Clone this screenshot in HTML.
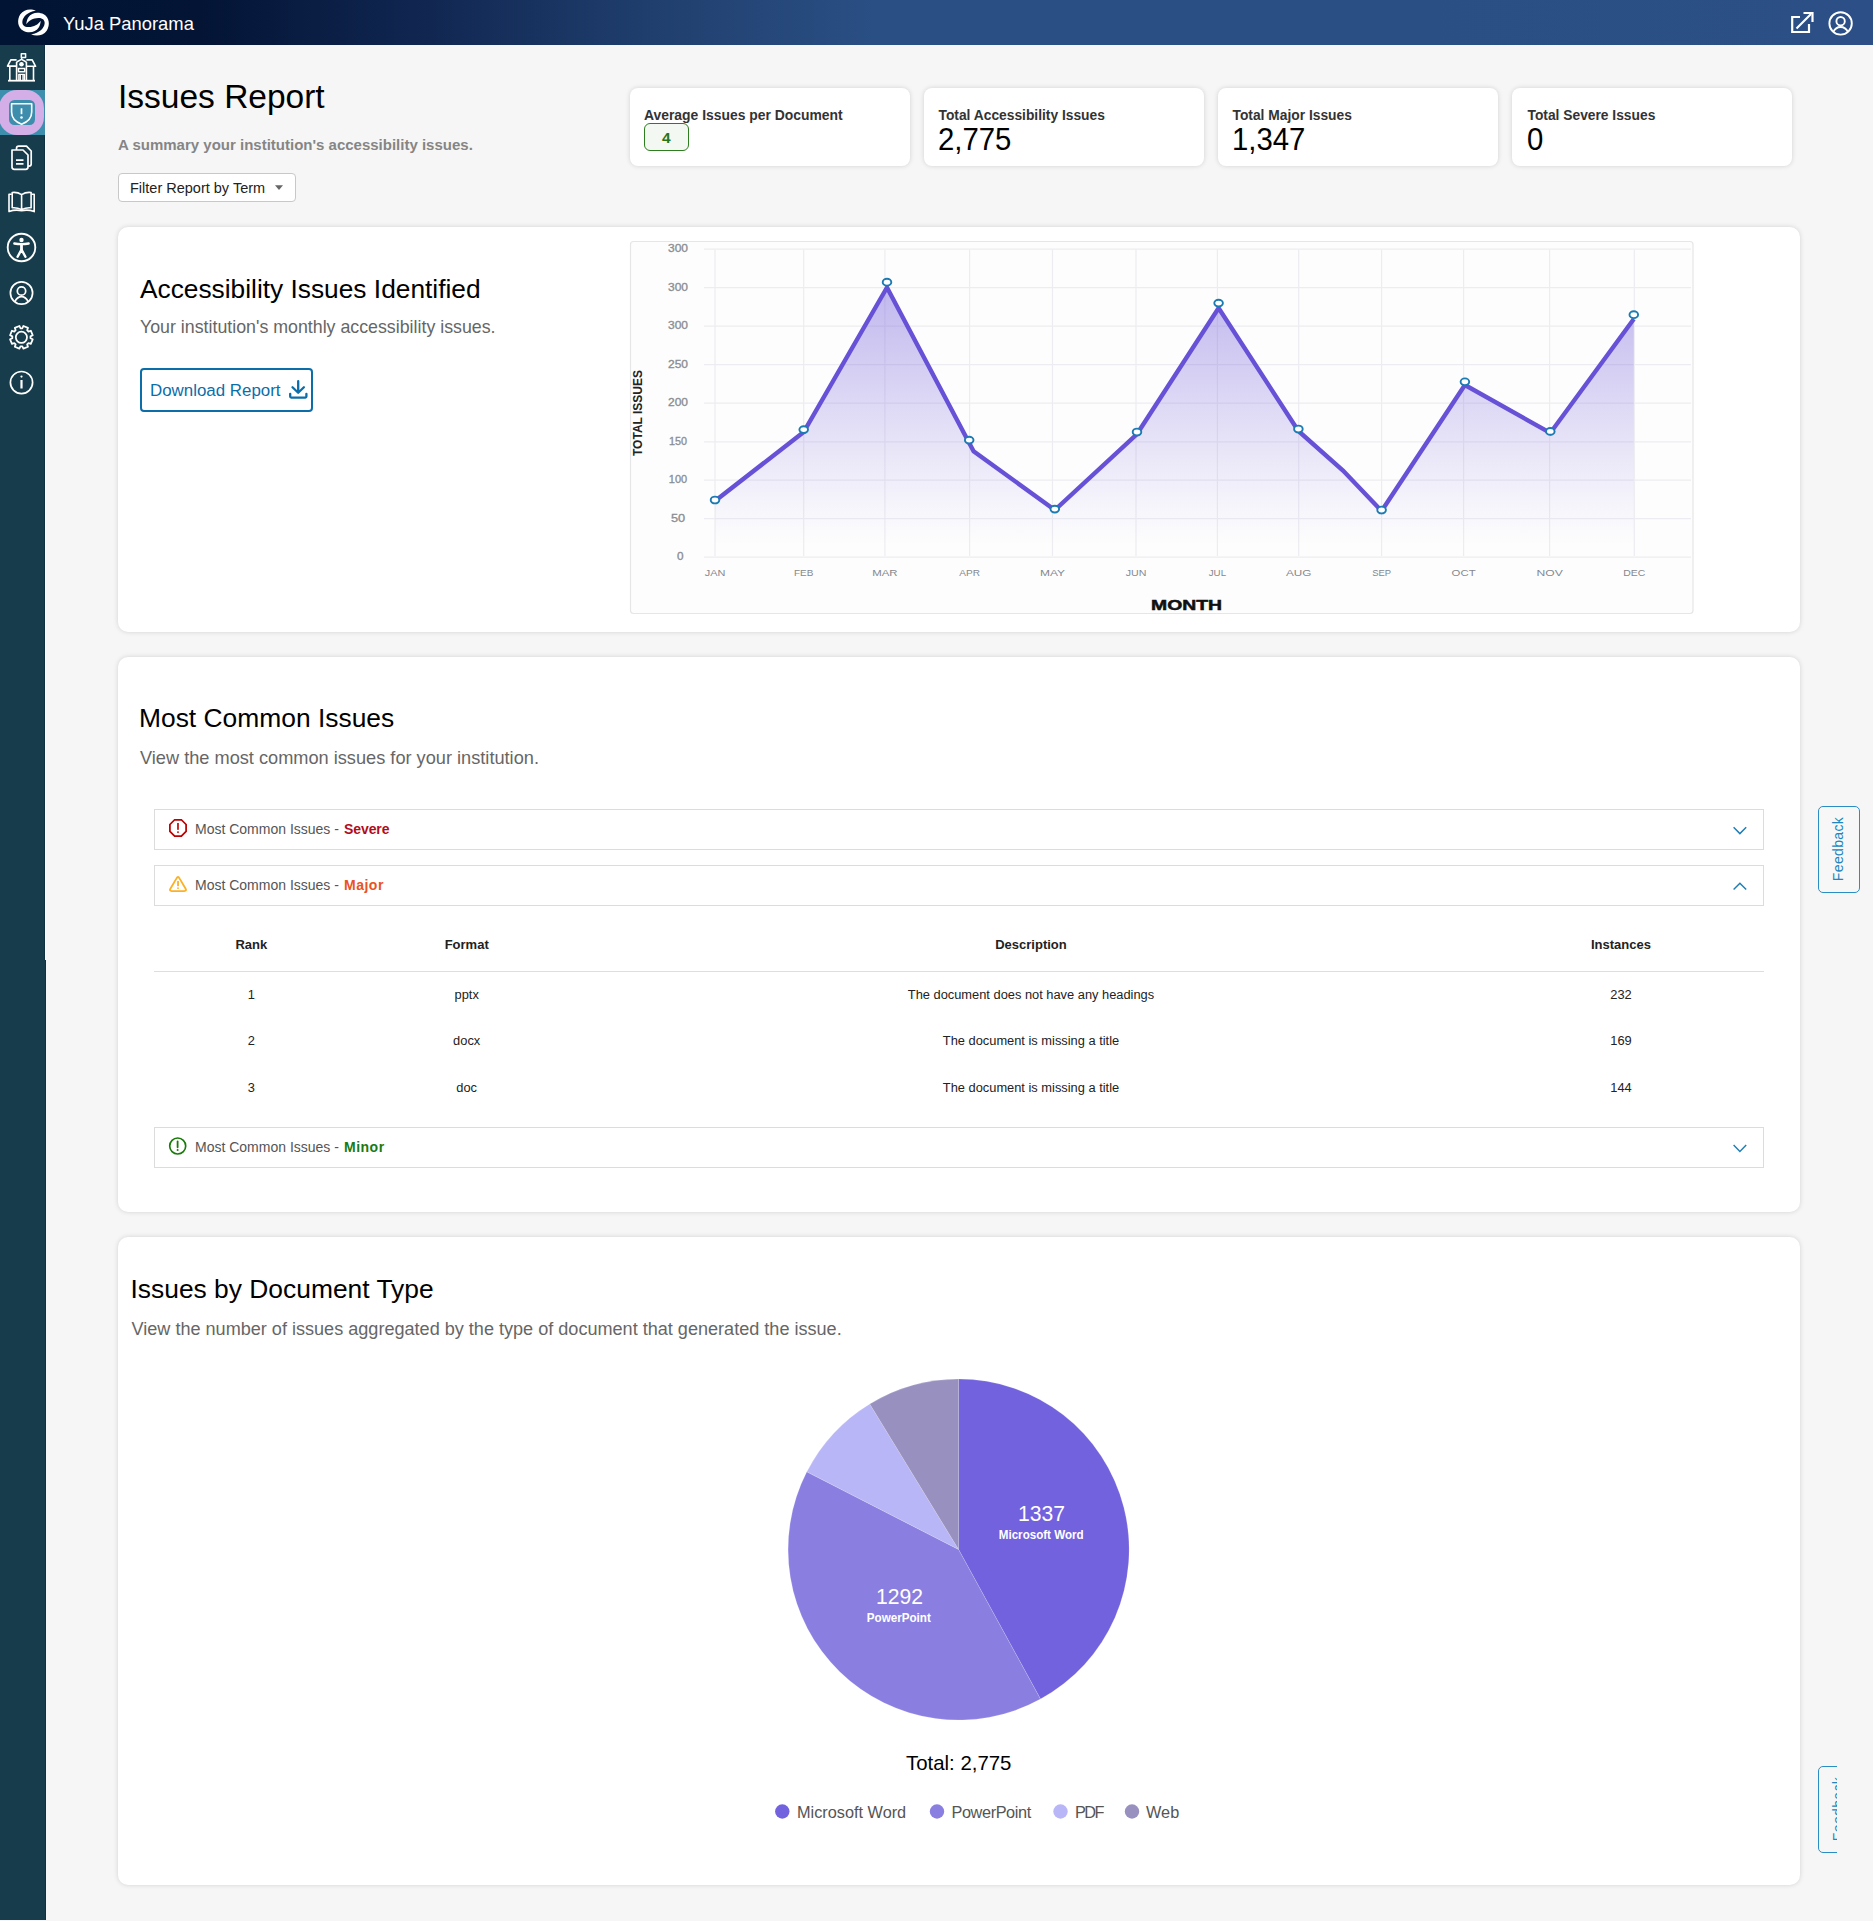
<!DOCTYPE html>
<html><head><meta charset="utf-8">
<style>
*{box-sizing:border-box;margin:0;padding:0}
html,body{width:1873px;height:1921px;overflow:hidden;background:#f6f6f6;font-family:"Liberation Sans",sans-serif;}
.abs{position:absolute}
#hdr{position:absolute;left:0;top:0;width:1873px;height:45px;background:linear-gradient(90deg,#021434 0px,#031435 200px,#112752 430px,#203f6e 655px,#2a4f84 875px,#2b4f86 1873px)}
#side{position:absolute;left:0;top:45px;width:45px;height:915px;background:#173c4c;box-shadow:inset -1px 0 0 #0d3140, 1px 0 0 #fff}
.card{position:absolute;background:#fff;border-radius:10px;box-shadow:0 0 5px rgba(0,0,0,0.15)}
.t{position:absolute;white-space:nowrap;line-height:1}
</style></head>
<body>
<div id="hdr">
<svg class="abs" style="left:0;top:0" width="60" height="45" viewBox="0 0 60 45">
 <path d="M35.9,10.8 C31,8.5 24,9 20.3,14.3 C16.5,20.3 17.8,27.8 23.3,30.8 C28.8,33.8 35.8,32.3 38.9,27.3 C40,25.3 40.6,22.8 40.7,20.7 C38.3,24.5 33.8,26.9 28.8,27.1 C24.5,27.3 21.9,25 22.4,21.3 C23,16.8 27.3,12 35.9,10.8 Z" fill="#fff"/>
 <path d="M31.1,34.3 C36,36.5 43,36 46.7,30.7 C50.5,24.7 49.2,17.2 43.7,14.2 C38.2,11.2 31.2,12.7 28.1,17.7 C27,19.7 26.4,22.2 26.3,24.3 C28.7,20.5 33.2,18.1 38.2,17.9 C42.5,17.7 45.1,20 44.6,23.7 C44,28.2 39.7,33 31.1,34.3 Z" fill="#fff"/>
</svg>
<div class="t" style="left:63px;top:15px;font-size:18.4px;color:#fff">YuJa Panorama</div>
<svg class="abs" style="left:1785px;top:6px" width="80" height="34" viewBox="1785 6 80 34">
 <path d="M1800 17 H1792.2 V32 H1809 V24" fill="none" stroke="#fff" stroke-width="2.2"/>
 <path d="M1796.5 28.5 L1811 14" fill="none" stroke="#fff" stroke-width="2.2"/>
 <path d="M1803.5 13 H1812.5 V22" fill="none" stroke="#fff" stroke-width="2.2"/>
 <circle cx="1840.6" cy="23.4" r="11.2" fill="none" stroke="#fff" stroke-width="1.9"/>
 <circle cx="1840.6" cy="21.2" r="4.2" fill="none" stroke="#fff" stroke-width="1.9"/>
 <path d="M1833.2 32.2 C1835 28.2 1838 27 1840.6 27 C1843.2 27 1846.2 28.2 1848 32.2" fill="none" stroke="#fff" stroke-width="1.9"/>
</svg>
</div>
<div class="abs" style="left:0;top:960px;width:46px;height:960px;background:#173c4c;box-shadow:inset -1px 0 0 #0d3140"></div>
<div id="side">
<div class="abs" style="left:0;top:44.7px;width:44.8px;height:45.8px;background:#3e8fae"></div>
<div class="abs" style="left:-1px;top:45px;width:45.3px;height:45.4px;background:#d4aee6;border-radius:18px"></div>
<div class="abs" style="left:8.9px;top:54.9px;width:26px;height:25.1px;background:#3d8dad;border-radius:5.5px"></div>
<svg class="abs" style="left:0;top:0" width="45" height="360" viewBox="0 45 45 360" fill="none" stroke="#fff" stroke-width="1.7" stroke-linejoin="round">
 <!-- school -->
 <path d="M8 80.7 H35" stroke-width="1.8"/>
 <path d="M9.8 80.7 V66 M33.5 80.7 V66 M16.6 80.7 V62 M26.4 80.7 V62" stroke-width="1.6"/>
 <path d="M16.6 59.9 H10.8 L7.5 66.1 H16.6 M26.4 59.9 H32.2 L35.6 66.3 H26.4" stroke-width="1.6"/>
 <path d="M16.6 62 L21.5 59.4 L26.4 62" stroke-width="1.5"/>
 <path d="M21.6 59.4 V57.6 M21.3 53.7 H25.6 V57.6 H21.3 Z" stroke-width="1.5"/>
 <circle cx="21.5" cy="64.3" r="2.3" fill="#fff" stroke="none"/>
 <path d="M18.5 68.4 H24.7 V71.7 H18.5 Z" stroke-width="1.5"/>
 <path d="M18.8 80.7 V74.3 H24.5 V80.7 M20.3 75 V80.7 M23 75 V80.7" stroke-width="1.3"/>
 <!-- shield -->
 <path d="M11.6 103.7 H31.7 V112 C31.7 118 27 122.2 21.6 124.2 C16.2 122.2 11.6 118 11.6 112 Z" stroke-width="1.6"/>
 <path d="M21.5 108.3 V114.2" stroke-width="1.7"/>
 <circle cx="21.5" cy="117.5" r="1.3" fill="#fff" stroke="none"/>
 <!-- docs -->
 <path d="M16.5 150 V148.5 Q16.5 146.2 18.8 146.2 H26.5 L31.2 151 V164 Q31.2 166.2 29 166.2 H28"/>
 <path d="M12 150 H23 L28 155 V167 Q28 169.3 25.8 169.3 H14.3 Q12 169.3 12 167 Z" fill="#173c4b"/>
 <path d="M16 160.2 H23.5 M16 163.8 H23.5"/>
 <!-- book -->
 <path d="M11.8 194.2 H9 V211.6 Q15.5 209.2 21.6 210.8 Q27.7 209.2 34.2 211.6 V194.2 H31.4" stroke-width="1.6"/>
 <path d="M12.2 192.5 V207.8 Q17 207.3 21.6 209.6 Q26.2 207.3 31.1 207.8 V192.5 Q26 191.8 21.6 194.6 Q17.2 191.8 12.2 192.5 Z M21.6 194.6 V209.6" stroke-width="1.6"/>
 <!-- accessibility -->
 <circle cx="21.5" cy="247.5" r="13.8" stroke-width="1.9"/>
 <circle cx="21.5" cy="240" r="2.2" fill="#fff" stroke="none"/>
 <path d="M14.3 243.5 Q21.5 244.8 28.7 243.5" stroke-width="2.3" stroke-linecap="round"/>
 <path d="M21.5 244 V250" stroke-width="2.8"/>
 <path d="M21.5 249.5 L17.6 256.8 M21.5 249.5 L25.4 256.8" stroke-width="2.4" stroke-linecap="round"/>
 <!-- user -->
 <circle cx="21.5" cy="293" r="11.1" stroke-width="1.7"/>
 <circle cx="21.5" cy="291" r="4.2" stroke-width="1.7"/>
 <path d="M14.8 301.6 Q17.5 296.6 21.5 296.6 Q25.5 296.6 28.2 301.6" stroke-width="1.7"/>
 <!-- gear -->
 <path d="M20.45 328.25 L22.35 328.25 L23.40 325.97 L28.00 327.88 L27.13 330.23 L28.47 331.57 L30.82 330.70 L32.73 335.30 L30.45 336.35 L30.45 338.25 L32.73 339.30 L30.82 343.90 L28.47 343.03 L27.13 344.37 L28.00 346.72 L23.40 348.63 L22.35 346.35 L20.45 346.35 L19.40 348.63 L14.80 346.72 L15.67 344.37 L14.33 343.03 L11.98 343.90 L10.07 339.30 L12.35 338.25 L12.35 336.35 L10.07 335.30 L11.98 330.70 L14.33 331.57 L15.67 330.23 L14.80 327.88 L19.40 325.97 Z" stroke-width="1.75" stroke-linejoin="round"/>
 <circle cx="21.4" cy="337.3" r="5.6" stroke-width="1.75"/>
 <!-- info -->
 <circle cx="21.5" cy="382.6" r="11.1" stroke-width="1.7"/>
 <circle cx="21.5" cy="376.6" r="1.1" fill="#fff" stroke="none"/>
 <path d="M21.5 380 V388.5" stroke-width="2.2"/>
</svg>
</div>

<!-- title -->
<div class="t" style="left:118px;top:79.5px;font-size:33.5px;color:#000">Issues Report</div>
<div class="t" style="left:118px;top:137px;font-size:15px;font-weight:bold;color:#858585">A summary your institution's accessibility issues.</div>
<div class="abs" style="left:118px;top:173px;width:178px;height:29px;border:1px solid #c8c8c8;border-radius:4px;background:#fff"></div>
<div class="t" style="left:130px;top:181px;font-size:14.5px;color:#222">Filter Report by Term</div>
<svg class="abs" style="left:274px;top:184px" width="10" height="7" viewBox="0 0 10 7"><path d="M1 1.2 H9 L5 6 Z" fill="#666"/></svg>

<!-- stat cards -->
<div class="card" style="left:630px;top:88px;width:280px;height:78px;border-radius:8px"></div>
<div class="card" style="left:924px;top:88px;width:280px;height:78px;border-radius:8px"></div>
<div class="card" style="left:1218px;top:88px;width:280px;height:78px;border-radius:8px"></div>
<div class="card" style="left:1512px;top:88px;width:280px;height:78px;border-radius:8px"></div>
<div class="t" style="left:644px;top:108.5px;font-size:13.9px;font-weight:bold;color:#333">Average Issues per Document</div>
<div class="abs" style="left:644px;top:123px;width:45px;height:28px;border:1.5px solid #2e7d1e;border-radius:6px;background:#f3f8f2"></div>
<div class="t" style="left:662px;top:130px;font-size:15.5px;font-weight:bold;color:#2a7512">4</div>
<div class="t" style="left:938.5px;top:109px;font-size:13.8px;font-weight:bold;color:#333">Total Accessibility Issues</div>
<div class="t" style="left:938px;top:124px;font-size:31.4px;color:#000;transform:scaleX(0.935);transform-origin:0 0">2,775</div>
<div class="t" style="left:1232.5px;top:109px;font-size:13.8px;font-weight:bold;color:#333">Total Major Issues</div>
<div class="t" style="left:1232px;top:124px;font-size:31.4px;color:#000;transform:scaleX(0.935);transform-origin:0 0">1,347</div>
<div class="t" style="left:1527.5px;top:109px;font-size:13.8px;font-weight:bold;color:#333">Total Severe Issues</div>
<div class="t" style="left:1527px;top:124px;font-size:31.4px;color:#000;transform:scaleX(0.935);transform-origin:0 0">0</div>

<!-- section cards -->
<div class="card" style="left:118px;top:227px;width:1682px;height:405px"></div>
<div class="card" style="left:118px;top:657px;width:1682px;height:555px"></div>
<div class="card" style="left:118px;top:1237px;width:1682px;height:648px"></div>

<!-- section 1 -->
<div class="t" style="left:140px;top:276px;font-size:26.3px;color:#000">Accessibility Issues Identified</div>
<div class="t" style="left:140px;top:319px;font-size:17.8px;color:#666">Your institution's monthly accessibility issues.</div>
<div class="abs" style="left:140px;top:368px;width:173px;height:44px;border:2px solid #0b6ea9;border-radius:4px"></div>
<div class="t" style="left:150px;top:383px;font-size:16.9px;color:#0b6ea9">Download Report</div>
<svg class="abs" style="left:286px;top:379px" width="24" height="22" viewBox="0 0 24 22" fill="none" stroke="#0b6ea9" stroke-width="2.3" stroke-linecap="round" stroke-linejoin="round">
 <path d="M12.2 2.2 V13.5 M6.5 8.2 L12.2 13.8 L17.9 8.2"/>
 <path d="M4.2 14.8 V17.6 Q4.2 18.6 5.2 18.6 H19.4 Q20.4 18.6 20.4 17.6 V14.8"/>
</svg>

<!-- chart -->
<svg class="abs" style="left:626px;top:237px" width="1072" height="381" viewBox="626 237 1072 381">
<defs><linearGradient id="ag" gradientUnits="userSpaceOnUse" x1="0" y1="282" x2="0" y2="545"><stop offset="0" stop-color="#6a55d8" stop-opacity="0.42"/><stop offset="0.5" stop-color="#6a55d8" stop-opacity="0.2"/><stop offset="0.85" stop-color="#6a55d8" stop-opacity="0.05"/><stop offset="1" stop-color="#6a55d8" stop-opacity="0"/></linearGradient></defs>
<rect x="630.5" y="241.5" width="1062.5" height="372" rx="3" fill="#fdfdfd" stroke="#e6e6e8" stroke-width="1.2"/>
<line x1="704" y1="249.2" x2="1691" y2="249.2" stroke="#ededf1" stroke-width="1.2"/>
<line x1="704" y1="287.6" x2="1691" y2="287.6" stroke="#ededf1" stroke-width="1.2"/>
<line x1="704" y1="326.1" x2="1691" y2="326.1" stroke="#ededf1" stroke-width="1.2"/>
<line x1="704" y1="364.6" x2="1691" y2="364.6" stroke="#ededf1" stroke-width="1.2"/>
<line x1="704" y1="403.2" x2="1691" y2="403.2" stroke="#ededf1" stroke-width="1.2"/>
<line x1="704" y1="441.8" x2="1691" y2="441.8" stroke="#ededf1" stroke-width="1.2"/>
<line x1="704" y1="480.2" x2="1691" y2="480.2" stroke="#ededf1" stroke-width="1.2"/>
<line x1="704" y1="518.6" x2="1691" y2="518.6" stroke="#ededf1" stroke-width="1.2"/>
<line x1="704" y1="557.2" x2="1691" y2="557.2" stroke="#ededf1" stroke-width="1.2"/>
<line x1="715" y1="249.5" x2="715" y2="556" stroke="#ededf1" stroke-width="1.2"/>
<line x1="803.7" y1="249.5" x2="803.7" y2="556" stroke="#ededf1" stroke-width="1.2"/>
<line x1="884.9" y1="249.5" x2="884.9" y2="556" stroke="#ededf1" stroke-width="1.2"/>
<line x1="969.6" y1="249.5" x2="969.6" y2="556" stroke="#ededf1" stroke-width="1.2"/>
<line x1="1052.5" y1="249.5" x2="1052.5" y2="556" stroke="#ededf1" stroke-width="1.2"/>
<line x1="1136" y1="249.5" x2="1136" y2="556" stroke="#ededf1" stroke-width="1.2"/>
<line x1="1217.4" y1="249.5" x2="1217.4" y2="556" stroke="#ededf1" stroke-width="1.2"/>
<line x1="1298.7" y1="249.5" x2="1298.7" y2="556" stroke="#ededf1" stroke-width="1.2"/>
<line x1="1381.6" y1="249.5" x2="1381.6" y2="556" stroke="#ededf1" stroke-width="1.2"/>
<line x1="1463.6" y1="249.5" x2="1463.6" y2="556" stroke="#ededf1" stroke-width="1.2"/>
<line x1="1549.6" y1="249.5" x2="1549.6" y2="556" stroke="#ededf1" stroke-width="1.2"/>
<line x1="1634.3" y1="249.5" x2="1634.3" y2="556" stroke="#ededf1" stroke-width="1.2"/>
<path d="M715,557 L715,501 L803.7,432 L887,287.5 L969.2,443 L973.6,451.3 L1054.8,510 L1137,434 L1218.6,308 L1298.4,431 L1343,470.6 L1381.6,511 L1464.9,385 L1550.3,433 L1633.8,319 L1633.8,557 Z" fill="url(#ag)"/>
<polyline points="715,501 803.7,432 887,287.5 969.2,443 973.6,451.3 1054.8,510 1137,434 1218.6,308 1298.4,431 1343,470.6 1381.6,511 1464.9,385 1550.3,433 1633.8,319" fill="none" stroke="#6751d6" stroke-width="4.4" stroke-linejoin="miter" stroke-miterlimit="3"/>
<ellipse cx="715" cy="500" rx="4.3" ry="3.4" fill="#fff" stroke="#1b7bb2" stroke-width="1.9"/>
<ellipse cx="803.7" cy="429.6" rx="4.3" ry="3.4" fill="#fff" stroke="#1b7bb2" stroke-width="1.9"/>
<ellipse cx="887" cy="282.2" rx="4.3" ry="3.4" fill="#fff" stroke="#1b7bb2" stroke-width="1.9"/>
<ellipse cx="969.2" cy="440.1" rx="4.3" ry="3.4" fill="#fff" stroke="#1b7bb2" stroke-width="1.9"/>
<ellipse cx="1054.8" cy="509.1" rx="4.3" ry="3.4" fill="#fff" stroke="#1b7bb2" stroke-width="1.9"/>
<ellipse cx="1137" cy="432" rx="4.3" ry="3.4" fill="#fff" stroke="#1b7bb2" stroke-width="1.9"/>
<ellipse cx="1218.6" cy="303.1" rx="4.3" ry="3.4" fill="#fff" stroke="#1b7bb2" stroke-width="1.9"/>
<ellipse cx="1298.4" cy="429" rx="4.3" ry="3.4" fill="#fff" stroke="#1b7bb2" stroke-width="1.9"/>
<ellipse cx="1381.6" cy="510" rx="4.3" ry="3.4" fill="#fff" stroke="#1b7bb2" stroke-width="1.9"/>
<ellipse cx="1464.9" cy="381.8" rx="4.3" ry="3.4" fill="#fff" stroke="#1b7bb2" stroke-width="1.9"/>
<ellipse cx="1550.3" cy="431.4" rx="4.3" ry="3.4" fill="#fff" stroke="#1b7bb2" stroke-width="1.9"/>
<ellipse cx="1633.8" cy="314.7" rx="4.3" ry="3.4" fill="#fff" stroke="#1b7bb2" stroke-width="1.9"/>
<text x="678" y="252.3" text-anchor="middle" font-size="10" fill="#8a8d93" stroke="#8a8d93" stroke-width="0.3" textLength="20" lengthAdjust="spacingAndGlyphs">300</text>
<text x="678" y="290.7" text-anchor="middle" font-size="10" fill="#8a8d93" stroke="#8a8d93" stroke-width="0.3" textLength="20" lengthAdjust="spacingAndGlyphs">300</text>
<text x="678" y="329.2" text-anchor="middle" font-size="10" fill="#8a8d93" stroke="#8a8d93" stroke-width="0.3" textLength="20" lengthAdjust="spacingAndGlyphs">300</text>
<text x="678" y="367.7" text-anchor="middle" font-size="10" fill="#8a8d93" stroke="#8a8d93" stroke-width="0.3" textLength="20" lengthAdjust="spacingAndGlyphs">250</text>
<text x="678" y="406.3" text-anchor="middle" font-size="10" fill="#8a8d93" stroke="#8a8d93" stroke-width="0.3" textLength="20" lengthAdjust="spacingAndGlyphs">200</text>
<text x="678" y="444.9" text-anchor="middle" font-size="10" fill="#8a8d93" stroke="#8a8d93" stroke-width="0.3" textLength="18" lengthAdjust="spacingAndGlyphs">150</text>
<text x="678" y="483.3" text-anchor="middle" font-size="10" fill="#8a8d93" stroke="#8a8d93" stroke-width="0.3" textLength="18.3" lengthAdjust="spacingAndGlyphs">100</text>
<text x="678" y="521.7" text-anchor="middle" font-size="10" fill="#8a8d93" stroke="#8a8d93" stroke-width="0.3" textLength="14.2" lengthAdjust="spacingAndGlyphs">50</text>
<text x="680.3" y="560.3" text-anchor="middle" font-size="10" fill="#8a8d93" stroke="#8a8d93" stroke-width="0.3" textLength="6.5" lengthAdjust="spacingAndGlyphs">0</text>
<text x="715" y="575.6" text-anchor="middle" font-size="9.8" fill="#85888e" textLength="20.6" lengthAdjust="spacingAndGlyphs">JAN</text>
<text x="803.7" y="575.6" text-anchor="middle" font-size="9.8" fill="#85888e" textLength="19.3" lengthAdjust="spacingAndGlyphs">FEB</text>
<text x="884.9" y="575.6" text-anchor="middle" font-size="9.8" fill="#85888e" textLength="25.4" lengthAdjust="spacingAndGlyphs">MAR</text>
<text x="969.6" y="575.6" text-anchor="middle" font-size="9.8" fill="#85888e" textLength="20.7" lengthAdjust="spacingAndGlyphs">APR</text>
<text x="1052.5" y="575.6" text-anchor="middle" font-size="9.8" fill="#85888e" textLength="25" lengthAdjust="spacingAndGlyphs">MAY</text>
<text x="1136" y="575.6" text-anchor="middle" font-size="9.8" fill="#85888e" textLength="20.7" lengthAdjust="spacingAndGlyphs">JUN</text>
<text x="1217.4" y="575.6" text-anchor="middle" font-size="9.8" fill="#85888e" textLength="17.3" lengthAdjust="spacingAndGlyphs">JUL</text>
<text x="1298.7" y="575.6" text-anchor="middle" font-size="9.8" fill="#85888e" textLength="25.4" lengthAdjust="spacingAndGlyphs">AUG</text>
<text x="1381.6" y="575.6" text-anchor="middle" font-size="9.8" fill="#85888e" textLength="18.9" lengthAdjust="spacingAndGlyphs">SEP</text>
<text x="1463.6" y="575.6" text-anchor="middle" font-size="9.8" fill="#85888e" textLength="24" lengthAdjust="spacingAndGlyphs">OCT</text>
<text x="1549.6" y="575.6" text-anchor="middle" font-size="9.8" fill="#85888e" textLength="26.3" lengthAdjust="spacingAndGlyphs">NOV</text>
<text x="1634.3" y="575.6" text-anchor="middle" font-size="9.8" fill="#85888e" textLength="22.1" lengthAdjust="spacingAndGlyphs">DEC</text>
<text transform="translate(641.8,413) rotate(-90)" text-anchor="middle" font-size="13.6" font-weight="bold" fill="#222" textLength="86" lengthAdjust="spacingAndGlyphs">TOTAL ISSUES</text>
<text x="1186.5" y="609.6" text-anchor="middle" font-size="14" font-weight="bold" fill="#111" textLength="71" lengthAdjust="spacingAndGlyphs" stroke="#111" stroke-width="0.5">MONTH</text>
</svg>

<!-- section 2 -->
<div class="t" style="left:139px;top:705px;font-size:26.4px;color:#000">Most Common Issues</div>
<div class="t" style="left:140px;top:749px;font-size:18.2px;color:#666">View the most common issues for your institution.</div>

<!-- section 3 -->
<div class="t" style="left:130.5px;top:1276px;font-size:26.4px;color:#000">Issues by Document Type</div>
<div class="t" style="left:131.5px;top:1320px;font-size:18.08px;color:#666">View the number of issues aggregated by the type of document that generated the issue.</div>

<!-- accordions -->
<div class="abs" style="left:154px;top:809px;width:1610px;height:41px;border:1px solid #dcdcdc;background:#fff"></div>
<div class="abs" style="left:154px;top:865px;width:1610px;height:41px;border:1px solid #dcdcdc;background:#fff"></div>
<div class="abs" style="left:154px;top:1127px;width:1610px;height:41px;border:1px solid #dcdcdc;background:#fff"></div>
<svg class="abs" style="left:160px;top:812px" width="40" height="36" viewBox="160 812 40 36">
 <path d="M174.64 819.75 L181.36 819.75 L186.1 824.5 L186.1 831.3 L181.36 836.05 L174.64 836.05 L169.9 831.3 L169.9 824.5 Z" fill="none" stroke="#bd0000" stroke-width="1.75"/>
 <rect x="177" y="823" width="1.95" height="6.8" fill="#c62828"/>
 <rect x="177" y="831.3" width="1.95" height="1.8" fill="#c94040"/>
</svg>
<svg class="abs" style="left:160px;top:868px" width="40" height="36" viewBox="160 868 40 36">
 <path d="M176.5 878.4 Q178 875.6 179.5 878.4 L185.5 888.5 Q187.1 891.1 184.2 891.1 H171.8 Q168.9 891.1 170.5 888.5 Z" fill="none" stroke="#fcb022" stroke-width="1.8" stroke-linejoin="round"/>
 <rect x="177.1" y="881" width="1.85" height="5.2" fill="#fcb32a"/>
 <rect x="177.1" y="887.4" width="1.85" height="1.6" fill="#fcc050"/>
</svg>
<svg class="abs" style="left:160px;top:1130px" width="40" height="36" viewBox="160 1130 40 36">
 <circle cx="177.7" cy="1146" r="8" fill="none" stroke="#187a08" stroke-width="1.65"/>
 <path d="M177.6 1141.5 V1147.3" stroke="#187a08" stroke-width="1.8" stroke-linecap="round"/>
 <circle cx="177.6" cy="1150" r="1" fill="#187a08"/>
</svg>
<div class="t" style="left:195px;top:822px;font-size:14px;color:#555">Most Common Issues - <b style="color:#b00d1b;margin-left:1.2px;letter-spacing:-0.1px">Severe</b></div>
<div class="t" style="left:195px;top:878px;font-size:14px;color:#555">Most Common Issues - <b style="color:#ea5223;margin-left:1.2px;letter-spacing:0.5px">Major</b></div>
<div class="t" style="left:195px;top:1140px;font-size:14px;color:#555">Most Common Issues - <b style="color:#1a7a12;margin-left:1.2px;letter-spacing:0.5px">Minor</b></div>
<svg class="abs" style="left:1725px;top:816px" width="30" height="345" viewBox="1725 815 30 345" fill="none" stroke="#1f7eb4" stroke-width="1.45">
 <path d="M1733.6 826.2 L1739.9 832.6 L1746.2 826.2"/>
 <path d="M1733.6 888.6 L1739.9 882.2 L1746.2 888.6"/>
 <path d="M1733.6 1144 L1739.9 1150.4 L1746.2 1144"/>
</svg>
<!-- table -->
<div class="abs" style="left:154px;top:970.5px;width:1610px;height:1px;background:#dedede"></div>
<div class="t" style="left:1.4px;top:938.3px;width:500px;text-align:center;font-size:13px;color:#222;font-weight:bold">Rank</div>
<div class="t" style="left:216.7px;top:938.3px;width:500px;text-align:center;font-size:13px;color:#222;font-weight:bold">Format</div>
<div class="t" style="left:781.0px;top:938.3px;width:500px;text-align:center;font-size:13px;color:#222;font-weight:bold">Description</div>
<div class="t" style="left:1371.0px;top:938.3px;width:500px;text-align:center;font-size:13px;color:#222;font-weight:bold">Instances</div>
<div class="t" style="left:1.4px;top:988.8px;width:500px;text-align:center;font-size:12.85px;color:#222">1</div>
<div class="t" style="left:216.7px;top:988.8px;width:500px;text-align:center;font-size:12.85px;color:#222">pptx</div>
<div class="t" style="left:781.0px;top:988.8px;width:500px;text-align:center;font-size:12.85px;color:#222">The document does not have any headings</div>
<div class="t" style="left:1371.0px;top:988.8px;width:500px;text-align:center;font-size:12.85px;color:#222">232</div>
<div class="t" style="left:1.4px;top:1035.4px;width:500px;text-align:center;font-size:12.85px;color:#222">2</div>
<div class="t" style="left:216.7px;top:1035.4px;width:500px;text-align:center;font-size:12.85px;color:#222">docx</div>
<div class="t" style="left:781.0px;top:1035.4px;width:500px;text-align:center;font-size:12.85px;color:#222">The document is missing a title</div>
<div class="t" style="left:1371.0px;top:1035.4px;width:500px;text-align:center;font-size:12.85px;color:#222">169</div>
<div class="t" style="left:1.4px;top:1082.4px;width:500px;text-align:center;font-size:12.85px;color:#222">3</div>
<div class="t" style="left:216.7px;top:1082.4px;width:500px;text-align:center;font-size:12.85px;color:#222">doc</div>
<div class="t" style="left:781.0px;top:1082.4px;width:500px;text-align:center;font-size:12.85px;color:#222">The document is missing a title</div>
<div class="t" style="left:1371.0px;top:1082.4px;width:500px;text-align:center;font-size:12.85px;color:#222">144</div>

<!-- pie -->
<svg class="abs" style="left:780px;top:1370px" width="360" height="360" viewBox="780 1370 360 360">
<path d="M958.6,1549.5 L958.60,1379.00 A170.5,170.5 0 0 1 1040.48,1699.05 Z" fill="#7262dd" stroke="#fff" stroke-width="0.5" stroke-opacity="0.3"/>
<path d="M958.6,1549.5 L1040.48,1699.05 A170.5,170.5 0 0 1 806.82,1471.83 Z" fill="#8a7fe0" stroke="#fff" stroke-width="0.5" stroke-opacity="0.3"/>
<path d="M958.6,1549.5 L806.82,1471.83 A170.5,170.5 0 0 1 869.77,1403.97 Z" fill="#b8b6f6" stroke="#fff" stroke-width="0.5" stroke-opacity="0.3"/>
<path d="M958.6,1549.5 L869.77,1403.97 A170.5,170.5 0 0 1 958.60,1379.00 Z" fill="#9891c0" stroke="#fff" stroke-width="0.5" stroke-opacity="0.3"/>
<text x="1041.5" y="1521" text-anchor="middle" font-size="21.8" fill="#fff" textLength="47" lengthAdjust="spacingAndGlyphs">1337</text>
<text x="1041.2" y="1539.1" text-anchor="middle" font-size="13.2" font-weight="bold" fill="#fff" textLength="84.8" lengthAdjust="spacingAndGlyphs">Microsoft Word</text>
<text x="899.4" y="1603.5" text-anchor="middle" font-size="21.8" fill="#fff" textLength="47" lengthAdjust="spacingAndGlyphs">1292</text>
<text x="898.8" y="1621.5" text-anchor="middle" font-size="13.2" font-weight="bold" fill="#fff" textLength="64" lengthAdjust="spacingAndGlyphs">PowerPoint</text>
</svg>
<div class="t" style="left:906px;top:1753px;font-size:20.4px;color:#000">Total: 2,775</div>
<svg class="abs" style="left:770px;top:1800px" width="420" height="24" viewBox="770 1800 420 24">
 <circle cx="782.3" cy="1811.5" r="7.2" fill="#7262dd"/>
 <circle cx="937" cy="1811.5" r="7.2" fill="#8a7fe0"/>
 <circle cx="1060.5" cy="1811.5" r="7.2" fill="#b8b6f6"/>
 <circle cx="1132" cy="1811.5" r="7.2" fill="#9891c0"/>
</svg>
<div class="t" style="left:797px;top:1804px;font-size:16.3px;color:#555">Microsoft Word</div>
<div class="t" style="left:951.5px;top:1804px;font-size:16.3px;color:#555;letter-spacing:-0.4px">PowerPoint</div>
<div class="t" style="left:1075px;top:1804px;font-size:16.3px;color:#555;letter-spacing:-1.6px">PDF</div>
<div class="t" style="left:1146px;top:1804px;font-size:16.3px;color:#555">Web</div>

<!-- feedback -->
<div class="abs" style="left:1818px;top:806px;width:42px;height:87px;border:1.7px solid #2a8ec4;border-radius:5px;background:#f7f7f7"></div>
<div class="t" style="left:1837.7px;top:849.3px;font-size:14px;letter-spacing:0.35px;color:#2186bf;transform:translate(-50%,-50%) rotate(-90deg)">Feedback</div>
<div class="abs" style="left:1818px;top:1766px;width:19px;height:87px;overflow:hidden">
 <div class="abs" style="left:0;top:0;width:42px;height:87px;border:1.7px solid #2a8ec4;border-radius:5px"></div>
 <div class="t" style="left:19.7px;top:43.3px;font-size:14px;letter-spacing:0.35px;color:#2186bf;transform:translate(-50%,-50%) rotate(-90deg)">Feedback</div>
</div>

</body></html>
